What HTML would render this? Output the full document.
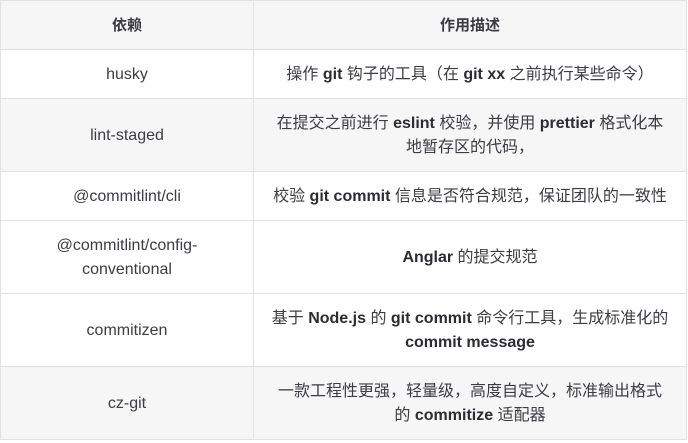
<!DOCTYPE html>
<html><head><meta charset="utf-8"><style>
html,body{margin:0;padding:0;background:#fff;}
table{border-collapse:collapse;position:absolute;left:0;top:0;width:687px;table-layout:fixed;font-family:"Liberation Sans","Noto Sans CJK SC",sans-serif;font-size:16px;line-height:24px;color:#3c3c43;}
td,th{border:1px solid #e2e2e3;text-align:center;padding:2px 8px 0;white-space:nowrap;}
th{background:#f6f6f7;font-weight:600;height:46px;font-size:15px;}
col.a{width:253px;}
tr.g td{background:#f6f6f7;}
tr.s td{height:46px;}
tr.t td{height:70px;}
b{font-weight:700;color:#2c2c33;}
</style></head><body>
<table>
<col class="a"><col>
<tr><th>依赖</th><th>作用描述</th></tr>
<tr class="s"><td>husky</td><td>操作 <b>git</b> 钩子的工具（在 <b>git xx</b> 之前执行某些命令）</td></tr>
<tr class="t g"><td>lint-staged</td><td>在提交之前进行 <b>eslint</b> 校验，并使用 <b>prettier</b> 格式化本<br>地暂存区的代码，</td></tr>
<tr class="s"><td>@commitlint/cli</td><td>校验 <b>git commit</b> 信息是否符合规范，保证团队的一致性</td></tr>
<tr class="t"><td>@commitlint/config-<br>conventional</td><td><b>Anglar</b> 的提交规范</td></tr>
<tr class="t"><td>commitizen</td><td>基于 <b>Node.js</b> 的 <b>git commit</b> 命令行工具，生成标准化的<br><b>commit message</b></td></tr>
<tr class="t g"><td>cz-git</td><td>一款工程性更强，轻量级，高度自定义，标准输出格式<br>的 <b>commitize</b> 适配器</td></tr>
</table>
</body></html>
